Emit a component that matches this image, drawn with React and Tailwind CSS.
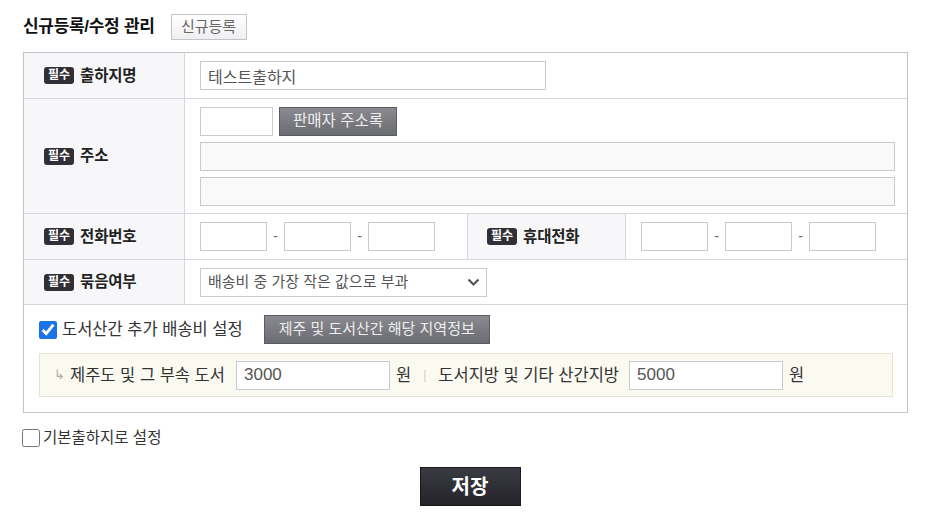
import React, { useState } from 'react';

const font = { fontFamily: '"Liberation Sans", "Noto Sans CJK KR", sans-serif' };

// 필수 배지
const Badge = () => (
  <span className="bg-[#303036] text-white text-[12px] font-bold rounded-[3px] px-[4px] leading-[17px]">필수</span>
);

// 왼쪽 라벨 셀
const Label = ({ children }) => (
  <div className="flex items-center gap-[6px] pl-[20px] bg-[#f7f7f9] border-r border-[#d6d6de] w-[161px] shrink-0">
    <Badge />
    <span className="text-[15.5px] font-bold text-[#222] tracking-[-0.2px]">{children}</span>
  </div>
);

const Input = ({ className = '', value, readOnly }) => (
  <input
    type="text"
    defaultValue={value}
    readOnly={readOnly}
    className={`h-[29px] border border-[#c9c9d1] px-[7px] text-[16px] text-[#555] outline-none ${readOnly ? 'bg-[#f9f9f9]' : 'bg-white'} ${className}`}
  />
);

const GrayButton = ({ children, className = '' }) => (
  <button className={`h-[29px] text-[15.5px] text-[#eee] bg-gradient-to-b from-[#8a8a90] to-[#6b6b72] border border-[#5c5c63] ${className}`}>
    {children}
  </button>
);

const PhoneInputs = () => (
  <div className="flex items-center">
    <Input className="w-[67px]" />
    <span className="w-[17px] text-center text-[#666] text-[14px]">-</span>
    <Input className="w-[67px]" />
    <span className="w-[17px] text-center text-[#666] text-[14px]">-</span>
    <Input className="w-[67px]" />
  </div>
);

export default function App() {
  const [island, setIsland] = useState(true);
  const [isDefault, setIsDefault] = useState(false);

  return (
    <div className="w-[936px] h-[532px] bg-white" style={font}>
      <div className="pl-[23px] pr-[28px] pt-[14px]">
        {/* 제목 */}
        <div className="flex items-center h-[26px]">
          <h2 className="text-[17px] font-bold text-[#111] tracking-[-0.3px]">신규등록/수정 관리</h2>
          <button className="ml-[16px] h-[26px] w-[76px] border border-[#c4c4c8] bg-gradient-to-b from-white to-[#efeff1] text-[15px] text-[#666]">신규등록</button>
        </div>

        {/* 등록 폼 */}
        <div className="mt-[12px] border border-[#c3c3cb] w-[885px]">
          <div className="flex h-[46px] border-b border-[#d6d6de]">
            <Label>출하지명</Label>
            <div className="flex items-center pl-[15px]">
              <Input className="w-[346px]" value="테스트출하지" />
            </div>
          </div>

          <div className="flex h-[115px] border-b border-[#d6d6de]">
            <Label>주소</Label>
            <div className="flex flex-col justify-center gap-[6px] pl-[15px] pr-[12px] flex-1">
              <div className="flex gap-[6px]">
                <Input className="w-[73px]" />
                <GrayButton className="w-[118px]">판매자 주소록</GrayButton>
              </div>
              <Input className="w-full" readOnly />
              <Input className="w-full" readOnly />
            </div>
          </div>

          <div className="flex h-[46px] border-b border-[#d6d6de]">
            <Label>전화번호</Label>
            <div className="flex items-center pl-[15px] w-[283px] border-r border-[#d6d6de]">
              <PhoneInputs />
            </div>
            <div className="flex items-center gap-[6px] pl-[19px] bg-[#f7f7f9] border-r border-[#d6d6de] w-[158px]">
              <Badge />
              <span className="text-[15.5px] font-bold text-[#222] tracking-[-0.2px]">휴대전화</span>
            </div>
            <div className="flex items-center pl-[15px]">
              <PhoneInputs />
            </div>
          </div>

          <div className="flex h-[45px] border-b border-[#d6d6de]">
            <Label>묶음여부</Label>
            <div className="flex items-center pl-[15px]">
              <div className="relative w-[287px]">
                <select className="appearance-none w-full h-[29px] border border-[#c9c9d1] bg-white pl-[7px] text-[15px] text-[#555] outline-none">
                  <option>배송비 중 가장 작은 값으로 부과</option>
                </select>
                <svg className="absolute right-[7px] top-[9px] pointer-events-none" width="13" height="10" viewBox="0 0 13 10">
                  <path d="M1.5 2.5 L6.5 7.5 L11.5 2.5" fill="none" stroke="#555" strokeWidth="2.2" />
                </svg>
              </div>
            </div>
          </div>

          {/* 도서산간 추가 배송비 */}
          <div className="px-[15px] pt-[11px] pb-[15px]">
            <div className="flex items-center h-[27px]">
              <label className="flex items-center gap-[5px] cursor-pointer">
                <input
                  type="checkbox"
                  checked={island}
                  onChange={(e) => setIsland(e.target.checked)}
                  className="w-[18px] h-[18px] accent-[#1a73e8]"
                />
                <span className="text-[16.5px] text-[#333]">도서산간 추가 배송비 설정</span>
              </label>
              <GrayButton className="ml-[21px] h-[26px] w-[226px] text-[15px]">제주 및 도서산간 해당 지역정보</GrayButton>
            </div>
            <div className="mt-[10px] h-[44px] w-[854px] flex items-center bg-[#fbfaf1] border border-[#e6e3cf] pl-[14px] text-[16.5px] text-[#333]">
              <span className="text-[#aaa] text-[13px] mr-[5px]">↳</span>
              <span>제주도 및 그 부속 도서</span>
              <Input className="ml-[11px] w-[154px] text-[17px] text-[#333]" value="3000" />
              <span className="ml-[6px]">원</span>
              <span className="mx-[12px] text-[#ccc] text-[12px]">|</span>
              <span>도서지방 및 기타 산간지방</span>
              <Input className="ml-[10px] w-[154px] text-[17px] text-[#333]" value="5000" />
              <span className="ml-[6px]">원</span>
            </div>
          </div>
        </div>

        <label className="mt-[13px] flex items-center gap-[3px] w-fit cursor-pointer">
          <input
            type="checkbox"
            checked={isDefault}
            onChange={(e) => setIsDefault(e.target.checked)}
            className="w-[18px] h-[18px] -ml-[1px]"
          />
          <span className="text-[15.5px] text-[#333]">기본출하지로 설정</span>
        </label>

        <div className="flex justify-center mt-[18px] pl-[9px]">
          <button className="w-[101px] h-[39px] bg-gradient-to-b from-[#3a3a42] to-[#24242a] border border-[#1a1a1e] text-white text-[20px] font-bold">
            저장
          </button>
        </div>
      </div>
    </div>
  );
}
